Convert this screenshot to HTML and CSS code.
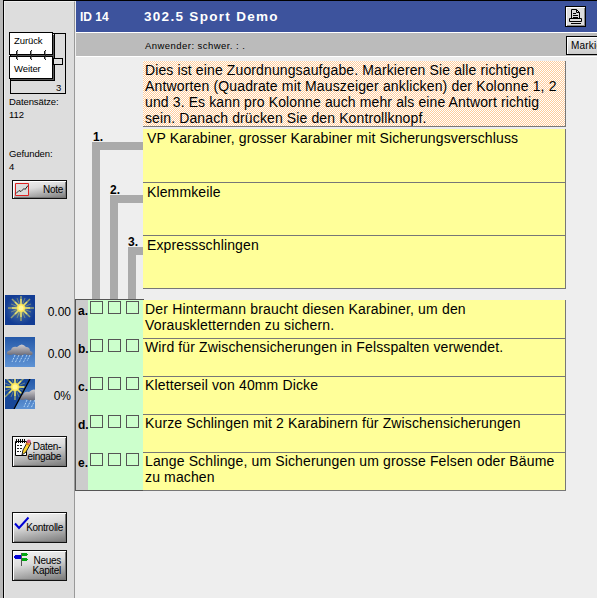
FILE: index.html
```html
<!DOCTYPE html>
<html lang="de">
<head>
<meta charset="utf-8">
<title>302.5 Sport Demo</title>
<link rel="stylesheet" href="styles.css">
</head>
<body>
<div class="window">
  <aside class="sidebar">
    <div class="book">
      <svg width="58" height="63" viewBox="0 0 58 63" shape-rendering="crispEdges">
        <path d="M1.500 1.500H56.500V61.500H1.500Z" fill="#ddd" stroke="#000"/>
        <path d="M2 3H45V48H2Z" fill="#555"/>
        <path d="M45.500 2V48.500H2" fill="none" stroke="#000"/>
        <path d="M.500.500H43.500V22.500H.500ZM.500 24.500H43.500V46.500H.500Z" fill="#fff" stroke="#000"/>
        <path d="M44.500 26.500H53.500V32.500H44.500Z" fill="#ddd" stroke="#000"/>
        <g id="rings" fill="#222"><path d="M8 18h1v1h-1zM7 19h1v3h-1zM8 22h1v3h-1zM7 25h1v2h-1zM8 27h1v1h-1z"/><path d="M22 18h1v1h-1zM21 19h1v3h-1zM22 22h1v3h-1zM21 25h1v2h-1zM22 27h1v1h-1z"/><path d="M36 18h1v1h-1zM35 19h1v3h-1zM36 22h1v3h-1zM35 25h1v2h-1zM36 27h1v1h-1z"/></g>
        <path d="M8 19h1v3h-1zM8 25h1v2h-1zM22 19h1v3h-1zM22 25h1v2h-1zM36 19h1v3h-1zM36 25h1v2h-1z" fill="#999"/>
      </svg>
      <span class="prev">Zurück</span><span class="next">Weiter</span><span class="current">3</span>
    </div>
    <p class="info">Datensätze:<br>112</p>
    <p class="info found">Gefunden:<br>4</p>
    <button class="btn note">
      <svg width="14" height="13" viewBox="0 0 14 13"><path d="M.500.500h13v12H.500z" fill="#ddd" stroke="#d22"/><path d="M1 10.500l3-3 2 1 3-3 1 1 3-4" fill="none" stroke="#222"/></svg>
      <span>Note</span>
    </button>
    <div class="scores">
      <div class="score">
        <svg width="30" height="30" viewBox="0 0 30 30">
          <defs>
            <radialGradient id="sky"><stop offset="0" stop-color="#8a9a78"/><stop offset=".5" stop-color="#31599c"/><stop offset="1" stop-color="#123c94"/></radialGradient>
            <linearGradient id="rain" x2="0" y2="1"><stop offset="0" stop-color="#2458a8"/><stop offset="1" stop-color="#5e93d4"/></linearGradient>
            <linearGradient id="cloud" x2="0" y2="1"><stop offset="0" stop-color="#d0cdd0"/><stop offset="1" stop-color="#686976"/></linearGradient>
            <g id="sun"><path d="M16 1v25M3 13h26M7 4l18 18M25 4L6 23" stroke="#d3cf62" stroke-width="1.500" opacity=".65"/><path d="M12 3l8 20M20 3l-8 20M6 9l20 8M6 17l20-8" stroke="#d3cf62" stroke-width=".8" opacity=".55"/><path d="M16 4v18M7 13h18M10 7l12 12M22 7L10 19" stroke="#e6df70" stroke-width="1.500"/><circle cx="16" cy="13" r="4" fill="#ffe957"/><circle cx="16" cy="13" r="2.500" fill="#fff799"/></g>
            <g id="storm"><path d="M2 17Q1 14 6 13Q7 9 12 10Q17 5 21 10Q25 10 25 14Q29 15 27 18Q23 19 20 17Q14 20 9 17Q5 19 2 17Z" fill="url(#cloud)"/><path d="M10 18l-3 7M14 18l-4 8M18 18l-4 8M22 18l-4 8M25 18l-3 6" stroke="#b4d6f6" stroke-dasharray="2 1"/></g>
          </defs>
          <path d="M0 0h30v30H0z" fill="url(#sky)"/><use href="#sun"/>
        </svg><span>0.00</span>
      </div>
      <div class="score">
        <svg width="30" height="30" viewBox="0 0 30 30"><path d="M0 0h30v30H0z" fill="url(#rain)"/><use href="#storm"/></svg><span>0.00</span>
      </div>
      <div class="score">
        <svg width="30" height="30" viewBox="0 0 30 30"><clipPath id="lower"><path d="M25 0h5v30H9z"/></clipPath><path d="M0 0h30v30H0z" fill="#174798"/><use href="#sun" x="-6" y="-5"/><g clip-path="url(#lower)"><path d="M0 0h30v30H0z" fill="url(#rain)"/><use href="#storm" x="12" y="3"/></g><path d="M25 0L9 30" stroke="#000" stroke-width="1.300"/></svg><span>0%</span>
      </div>
    </div>
    <button class="btn tall entry">
      <svg width="18" height="20" viewBox="0 0 18 20"><path d="M1.500 3.500h11v14h-11z" fill="#fff" stroke="#000"/><path d="M2.500 1v4m2-4v4m2-4v4m2-4v4m2-4v4" stroke="#000"/><path d="M3 7.500h5M3 10.500h5M3 13.500h4" stroke="#222" stroke-dasharray="2 1"/><path d="M8 17l1-5 5-9 3 2-5 9z" fill="#ffd52e" stroke="#222"/><path d="M12 5l3 2" stroke="#e67918" stroke-width="2"/><circle cx="14.800" cy="3.500" r="2" fill="#d75a7c"/></svg>
      <span>Daten-<br>eingabe</span>
    </button>
    <button class="btn tall check">
      <svg width="18" height="20" viewBox="0 0 18 20"><path d="M1 9.500l4 4.500L14.500 3.500" fill="none" stroke="#0000d4" stroke-width="2"/></svg>
      <span>Kontrolle</span>
    </button>
    <button class="btn tall chapter">
      <svg width="18" height="20" viewBox="0 0 18 20" shape-rendering="crispEdges"><path d="M7 1h1v13H7z" fill="#555"/><path d="M0 4h1V3h6v4H1V6H0z" fill="#0000d4"/><path d="M8 1h5v1h1v1h-1v1H8zM8 6h5v1h1v1h-1v1H8z" fill="#00a510"/></svg>
      <span>Neues<br>Kapitel</span>
    </button>
  </aside>
  <main class="main">
    <header class="title"><b class="id">ID 14</b><b class="name">302.5 Sport Demo</b>
      <button class="print"><svg width="15" height="15" viewBox="0 0 15 15"><path d="M3.500 9V.500h5l3 3V9M8.500.500v3h3M5 4.500h3M5 6.500h5M5 8.500h5M1.500 9.500h12v3h-12zM3 14.500h10" fill="none" stroke="#000"/></svg></button>
    </header>
    <div class="user"><span>Anwender: schwer. : .</span><button class="mark">Markieren</button></div>
    <section class="intro"><div class="l1">Dies ist eine Zuordnungsaufgabe. Markieren Sie alle richtigen</div><div class="l2">Antworten (Quadrate mit Mauszeiger anklicken) der Kolonne 1, 2</div><div class="l3">und 3. Es kann pro Kolonne auch mehr als eine Antwort richtig</div><div class="l4">sein. Danach drücken Sie den Kontrollknopf.</div></section>
    <section class="terms">
      <svg class="links" width="67" height="170" viewBox="0 0 67 170" shape-rendering="crispEdges">
        <path d="M16 170V13h51v8H24v149zM34 170V66h33v8H42v96zM52 170V118h15v8H60v44z" fill="#aaa"/>
        <g class="num"><text x="17" y="12">1.</text><text x="34" y="65">2.</text><text x="52" y="117">3.</text></g>
      </svg>
      <div class="list">
        <div class="term">VP Karabiner, grosser Karabiner mit Sicherungsverschluss</div>
        <div class="term">Klemmkeile</div>
        <div class="term">Expressschlingen</div>
      </div>
    </section>
    <section class="answers">
      <div class="row"><b>a.</b><div class="boxes"><i></i><i></i><i></i></div><div class="text"><div class="wide">Der Hintermann braucht diesen Karabiner, um den</div><div class="wide">Vorauskletternden zu sichern.</div></div></div>
      <div class="row"><b>b.</b><div class="boxes"><i></i><i></i><i></i></div><div class="text">Wird für Zwischensicherungen in Felsspalten verwendet.</div></div>
      <div class="row"><b>c.</b><div class="boxes"><i></i><i></i><i></i></div><div class="text">Kletterseil von 40mm Dicke</div></div>
      <div class="row"><b>d.</b><div class="boxes"><i></i><i></i><i></i></div><div class="text">Kurze Schlingen mit 2 Karabinern für Zwischensicherungen</div></div>
      <div class="row"><b>e.</b><div class="boxes"><i></i><i></i><i></i></div><div class="text">Lange Schlinge, um Sicherungen um grosse Felsen oder Bäume<br>zu machen</div></div>
    </section>
  </main>
</div>
</body>
</html>
```

FILE: styles.css
```css
* { box-sizing: border-box; }
body { margin: 0; width: 597px; height: 598px; overflow: hidden; background: #b8b8b8; font-family: "Liberation Sans", Arial, sans-serif; color: #000; }
button { font: inherit; color: inherit; padding: 0; margin: 0; border-radius: 0; }
.window { display: flex; height: 598px; margin-left: 3px; border-left: 1px solid #000; border-top: 1px solid #000; }
.sidebar { width: 71px; flex: none; background: #ddd; border-left: 1px solid #eee; border-top: 1px solid #eee; border-right: 1px solid #999; padding: 30px 0 0 4px; }
.book { position: relative; height: 63px; }
.book svg { display: block; }
.book span { position: absolute; font-size: 9.5px; line-height: 11px; letter-spacing: -.1px; }
.book .prev { left: 5px; top: 3px; }
.book .next { left: 5px; top: 31px; }
.book .current { left: 47px; top: 50px; }
.info { margin: 0; height: 52px; font-size: 9.5px; line-height: 13px; white-space: nowrap; letter-spacing: -.1px; }
.found { height: 33px; }
.btn { display: flex; position: relative; align-items: center; justify-content: flex-end; width: 55px; height: 19px; margin-left: 3px; padding: 0 3px; border: 1px solid #111; background: linear-gradient(170deg, #f4f4f4, #ddd 40%, #777); box-shadow: inset 1px 1px #fff, inset -1px -1px #777; font-size: 10px; line-height: 10px; text-align: right; letter-spacing: -.3px; }
.btn svg { position: absolute; left: 2px; top: 2px; }
.scores { margin: 96px 0 27px -4px; display: grid; gap: 12px; }
.score { display: flex; height: 30px; align-items: center; justify-content: space-between; padding-right: 3px; font-size: 12px; }
.score span { padding-top: 4px; }
.score svg { display: block; }
.tall { height: 31px; }
.tall svg { left: 1px; top: 1px; }
.check { margin-top: 45px; }
.chapter { margin-top: 7px; }
.chapter span, .entry span { padding-right: 2px; }
.main { flex: 1; min-width: 0; background: #eee; }
.title { display: flex; align-items: center; height: 32px; margin-left: 1px; border-bottom: 1px solid #fff; background: #3d539d; color: #fff; font-size: 13.5px; padding-left: 4px; }
.id { width: 64px; font-size: 12px; }
.name { letter-spacing: 1.3px; }
.print { margin-left: auto; margin-right: 11px; width: 21px; height: 21px; border: 1px solid #000; background: #ddd; box-shadow: inset 1px 1px #fff, inset -1px -1px #888; display: flex; align-items: center; justify-content: center; }
.user { height: 24px; margin-left: 1px; background: #bbb; border-bottom: 1px solid #fff; display: flex; justify-content: space-between; align-items: center; padding: 1px 0 0 69px; font-size: 9.5px; letter-spacing: .45px; }
.mark { width: 60px; margin-right: -29px; height: 19px; border: 1px solid #000; background: linear-gradient(#eee, #ccc); box-shadow: inset 1px 1px #fff; font-size: 10px; text-align: left; padding-left: 4px; letter-spacing: .2px; }
.intro { width: 423px; height: 66px; margin: 4px 0 0 68px; padding: 1px 0 0 2px; border-right: 1px solid #777; border-bottom: 1px solid #777; background: repeating-conic-gradient(#fc9 0 25%, #fff 0 50%) 0 0 / 2px 2px; font-size: 14px; line-height: 16px; white-space: nowrap; letter-spacing: .12px; }
.l2 { letter-spacing: .15px; }
.terms { display: flex; height: 170px; margin-top: 2px; padding-left: 1px; }
.links { flex: none; }
.num { font-size: 12px; font-weight: bold; }
.list { width: 423px; }
.term { height: 53px; padding: 1px 0 0 4px; border-right: 1px solid #777; border-bottom: 1px solid #777; background: #ff9; font-size: 14px; line-height: 16px; white-space: nowrap; letter-spacing: .13px; }
.term:first-child { height: 54px; }
.answers { width: 491px; border-left: 1px solid #555; background: linear-gradient(#555, #555) 0 0 / 68px 1px no-repeat; padding-top: 1px; }
.row { display: flex; height: 38px; background: #cfc; }
.row:first-child { height: 39px; }
.row > b { width: 12px; flex: none; background: #ccc; font-size: 12px; padding: 3px 0 0 2px; white-space: nowrap; }
.row:first-child > b { padding-top: 4px; }
.boxes { display: flex; width: 55px; gap: 5px; padding: 0 0 0 2px; }
.row:first-child .boxes { padding-top: 1px; }
.boxes i { width: 13px; height: 13px; border: 1px solid #555; }
.row:last-child > b, .row:last-child .boxes { border-bottom: 1px solid #555; }
.text { flex: 1; background: #ff9; border-right: 1px solid #777; border-bottom: 1px solid #777; padding: 0 0 0 2px; font-size: 14px; line-height: 16px; white-space: nowrap; letter-spacing: .135px; }
.row:first-child .text { padding-top: 1px; }
.wide { letter-spacing: .17px; }
```
